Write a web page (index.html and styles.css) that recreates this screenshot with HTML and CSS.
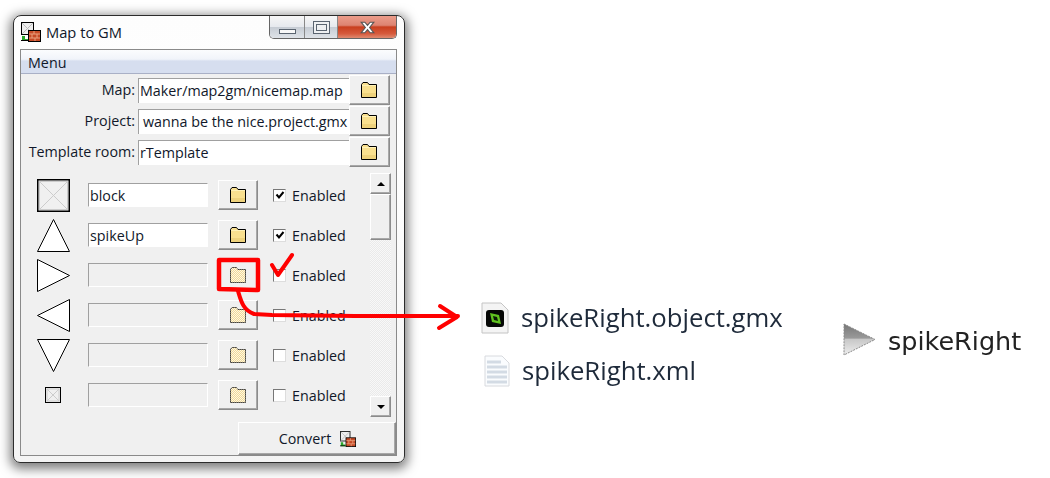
FILE: index.html
```html
<!DOCTYPE html>
<html lang="en">
<head>
<meta charset="utf-8">
<title>Map to GM</title>
<link rel="stylesheet" href="styles.css">
</head>
<body>
<svg class="defs" aria-hidden="true">
  <defs>
    <pattern id="dither" width="2" height="2" patternUnits="userSpaceOnUse">
      <rect width="2" height="2" fill="#fff8e0"/>
      <rect width="1" height="1" fill="#f0d898"/>
      <rect x="1" y="1" width="1" height="1" fill="#f0d898"/>
    </pattern>
    <linearGradient id="spikeShade" x1="0" y1="0" x2="0" y2="1">
      <stop offset="0" stop-color="#777"/>
      <stop offset=".45" stop-color="#999"/>
      <stop offset=".5" stop-color="#c8c8c8"/>
      <stop offset="1" stop-color="#eee"/>
    </linearGradient>
    <symbol id="folder" viewBox="0 0 16 16">
      <path d="M.5 15.500V2.500L2 .5H6.500L8 2.500H15.500V15.500Z" fill="#f9e08f" stroke="#000"/>
      <rect x="1" y="11" width="14" height="4" fill="#eed27c"/>
      <path d="M1 3.500H15" stroke="#fff2b8"/>
    </symbol>
    <symbol id="folder-off" viewBox="0 0 16 16">
      <path d="M.5 15.500V2.500L2 .5H6.500L8 2.500H15.500V15.500Z" fill="url(#dither)" stroke="#000" stroke-dasharray="1.200 .8"/>
    </symbol>
    <symbol id="app" viewBox="0 0 20 20">
      <rect x=".5" y=".5" width="12" height="12" fill="#eee" stroke="#000"/>
      <path d="M1 1L12 12M12 1L1 12" stroke="#bbb"/>
      <rect x="7.500" y="8.500" width="12" height="11" fill="#c64a26" stroke="#000"/>
      <path d="M8 12H19M8 16H19M13 9V12M11 12V16M16 12V16M14 16V19" stroke="#e9a07e"/>
      <path d="M1 14V19H7V17H4V14Z" fill="#2aa62a"/>
      <path d="M0 18.500H7" stroke="#000"/>
    </symbol>
  </defs>
</svg>

<main class="stage">
  <section class="window">
    <header class="titlebar">
      <svg class="app-icon"><use href="#app"/></svg>
      <span class="title">Map to GM</span>
      <div class="controls">
        <span class="ctl ctl-min"><i class="min-glyph"></i></span>
        <span class="ctl ctl-max"><i class="max-glyph"></i></span>
        <span class="ctl ctl-close">
          <svg class="close-glyph" viewBox="0 0 16 12"><path d="M2 1H5.500L8 4L10.500 1H14L10 6L14 11H10.500L8 8L5.500 11H2L6 6Z" fill="#fff" stroke="#555"/></svg>
        </span>
      </div>
    </header>

    <div class="client">
      <nav class="menubar">Menu</nav>

      <div class="paths">
        <label class="path-label">Map:</label>
        <div class="field field-path">Maker/map2gm/nicemap.map</div>
        <button class="btn btn-path"><svg class="folder"><use href="#folder"/></svg></button>

        <label class="path-label">Project:</label>
        <div class="field field-path field-inset">wanna be the nice.project.gmx</div>
        <button class="btn btn-path"><svg class="folder"><use href="#folder"/></svg></button>

        <label class="path-label">Template room:</label>
        <div class="field field-path">rTemplate</div>
        <button class="btn btn-path"><svg class="folder"><use href="#folder"/></svg></button>
      </div>

      <div class="objects">
        <div class="object-list">
          <div class="object">
            <div class="sprite"><svg class="sprite-svg" viewBox="0 0 33 33"><rect x=".75" y=".75" width="31.500" height="31.500" fill="#f0f0f0" stroke="#000" stroke-width="1.500"/><rect x="2.500" y="2.500" width="28" height="28" fill="none" stroke="#ccc"/><path d="M3 3L30 30M30 3L3 30" stroke="#ccc"/></svg></div>
            <div class="field field-object">block</div>
            <button class="btn btn-object"><svg class="folder"><use href="#folder"/></svg></button>
            <span class="check"><svg class="tick" viewBox="0 0 10 10"><path d="M1.500 4.500L4 7.500L8.500 2" fill="none" stroke="#000" stroke-width="2"/></svg></span>
            <span class="check-label">Enabled</span>
          </div>
          <div class="object">
            <div class="sprite"><svg class="sprite-svg" viewBox="0 0 33 33"><path d="M16.500 .5L32.500 32.500H.5Z" fill="#fff" stroke="#000"/></svg></div>
            <div class="field field-object">spikeUp</div>
            <button class="btn btn-object"><svg class="folder"><use href="#folder"/></svg></button>
            <span class="check"><svg class="tick" viewBox="0 0 10 10"><path d="M1.500 4.500L4 7.500L8.500 2" fill="none" stroke="#000" stroke-width="2"/></svg></span>
            <span class="check-label">Enabled</span>
          </div>
          <div class="object">
            <div class="sprite"><svg class="sprite-svg" viewBox="0 0 33 33"><path d="M.5 .5L32.500 16.500L.5 32.500Z" fill="#fff" stroke="#000"/></svg></div>
            <div class="field field-object field-off"></div>
            <button class="btn btn-object"><svg class="folder"><use href="#folder-off"/></svg></button>
            <span class="check"></span>
            <span class="check-label">Enabled</span>
          </div>
          <div class="object">
            <div class="sprite"><svg class="sprite-svg" viewBox="0 0 33 33"><path d="M32.500 .5L.5 16.500L32.500 32.500Z" fill="#fff" stroke="#000"/></svg></div>
            <div class="field field-object field-off"></div>
            <button class="btn btn-object"><svg class="folder"><use href="#folder-off"/></svg></button>
            <span class="check"></span>
            <span class="check-label">Enabled</span>
          </div>
          <div class="object">
            <div class="sprite"><svg class="sprite-svg" viewBox="0 0 33 33"><path d="M.5 .5H32.500L16.500 32.500Z" fill="#fff" stroke="#000"/></svg></div>
            <div class="field field-object field-off"></div>
            <button class="btn btn-object"><svg class="folder"><use href="#folder-off"/></svg></button>
            <span class="check"></span>
            <span class="check-label">Enabled</span>
          </div>
          <div class="object">
            <div class="sprite"><svg class="sprite-small" viewBox="0 0 16 16"><rect x=".5" y=".5" width="15" height="15" fill="#f0f0f0" stroke="#000"/><rect x="2" y="2" width="12" height="12" fill="none" stroke="#ccc"/><path d="M2 2L14 14M14 2L2 14" stroke="#ccc"/></svg></div>
            <div class="field field-object field-off"></div>
            <button class="btn btn-object"><svg class="folder"><use href="#folder-off"/></svg></button>
            <span class="check"></span>
            <span class="check-label">Enabled</span>
          </div>
        </div>

        <div class="scrollbar">
          <span class="btn scroll-btn"><i class="arrow-up"></i></span>
          <span class="btn scroll-thumb"></span>
          <span class="scroll-track"></span>
          <span class="btn scroll-btn"><i class="arrow-down"></i></span>
        </div>
      </div>

      <div class="footer">
        <button class="btn btn-convert">Convert <svg class="convert-icon"><use href="#app"/></svg></button>
      </div>
    </div>
  </section>

  <section class="files">
    <div class="file file-gmx">
      <svg class="file-icon" viewBox="0 0 28 32"><path d="M1 1H20L27 8V31H1Z" fill="#f4f4f4" stroke="#c4c4c4"/><rect x="5" y="8" width="18" height="17" rx="3" fill="#060806"/><path d="M9 11L18 13L20 22L11 20Z" fill="#5fc21f"/><path d="M12 14L16 15L17 19L13 18Z" fill="#0a1a05"/></svg>
      <span class="file-name">spikeRight.object.gmx</span>
    </div>
    <div class="file file-xml">
      <svg class="file-icon file-icon-xml" viewBox="0 0 26 32"><path d="M1 1H18L25 8V31H1Z" fill="#fafcfe" stroke="#d8dade"/><path d="M3 7H17M3 12H23M3 17H23M3 22H23M3 27H23" stroke="#d3dbe4" stroke-width="3"/></svg>
      <span class="file-name">spikeRight.xml</span>
    </div>
  </section>

  <section class="resource">
    <svg class="resource-icon" viewBox="0 0 33 33"><path d="M1 1L32 16.500L1 32Z" fill="url(#spikeShade)" stroke="#888" stroke-dasharray="2 1"/></svg>
    <span class="resource-name">spikeRight</span>
  </section>
</main>

<svg class="annotation" viewBox="0 0 1050 478" aria-hidden="true">
  <g fill="none" stroke="#f00" stroke-width="4" stroke-linecap="round" stroke-linejoin="round">
    <path d="M219 260H258L258 290L219 289Z" stroke-width="4.500"/>
    <path d="M238 291C241 301 243 310 254 314L272 315L355 316L458 316"/>
    <path d="M440 306L457 317L439 328"/>
    <path d="M272 265L278 275L292 255"/>
  </g>
</svg>
</body>
</html>
```
FILE: styles.css
```css
* { box-sizing: border-box; }
html, body { margin: 0; height: 100%; overflow: hidden; background: #fff; }
body { position: relative; font-family: "Open Sans", sans-serif; font-size: 14.3px; color: #10182a; }
.defs { position: absolute; width: 0; height: 0; }

.stage { display: flex; align-items: flex-start; width: 1050px; height: 478px; padding: 15px 0 0 13px; }

/* window */
.window {
  flex: none; width: 392px; height: 448px; padding: 0 7px 6px 6px;
  border: 1px solid #2c2c2c; border-radius: 8px 8px 7px 7px;
  background: linear-gradient(#fdfdfd, #fff 30%, #f4f4f4);
  box-shadow: 0 3px 11px 3px rgba(0,0,0,.5);
  display: flex; flex-direction: column;
}
.titlebar { flex: none; height: 33px; display: flex; align-items: flex-start; position: relative; }
.app-icon { width: 20px; height: 20px; margin: 6px 5px 0 1px; flex: none; }
.title { margin-top: 5px; line-height: 22px; font-size: 14.7px; }
.controls { margin-left: auto; display: flex; height: 23px; width: 128px; border: 1px solid #666; border-top: 0; border-radius: 0 0 5px 5px; overflow: hidden; }
.ctl { display: flex; align-items: center; justify-content: center; }
.ctl-min, .ctl-max { background: linear-gradient(#f6f6f6 0, #e6e9ee 48%, #c6ccd4 52%, #dfe3e8 100%); border-right: 1px solid #888; }
.ctl-min { width: 35px; }
.ctl-max { width: 33px; }
.ctl-close { flex: 1; background: linear-gradient(#eb9c8a 0, #dd8472 42%, #c93f1f 50%, #d65a3c 80%, #e08a70 100%); }
.min-glyph { display: block; width: 17px; height: 5px; margin-top: 8px; background: #f8f8f8; border: 1px solid #5a6470; }
.max-glyph { display: block; width: 17px; height: 13px; border: 1px solid #5a6470; position: relative; background: #eef0f2; }
.max-glyph::after { content: ""; position: absolute; left: 2px; top: 2px; right: 2px; bottom: 2px; border: 1px solid #5a6470; }
.close-glyph { width: 17px; height: 13px; }

.client { flex: 1; min-height: 0; border: 1px solid #8a8a8a; background: #f0f0f0; display: flex; flex-direction: column; }
.menubar { flex: none; height: 24px; padding: 0 7px; line-height: 25px; border-bottom: 1px solid #a9b0c6; background: linear-gradient(#fbfcfe 0, #f1f4fa 40%, #d6deef 48%, #d6deef 100%); }

/* file paths */
.paths { flex: none; display: grid; grid-template-columns: auto 211px 41px; row-gap: 1px; grid-auto-rows: 30px; padding-top: 1px; margin-right: 6px; justify-content: end; align-items: center; }
.path-label { text-align: right; white-space: nowrap; line-height: 30px; padding-right: 3px; }

.field { background: #fff; border-top: 1px solid #a0a0a0; border-left: 1px solid #a0a0a0; white-space: nowrap; overflow: hidden; }
.field-path { height: 25px; line-height: 23px; padding-left: 1px; }
.field-inset { padding-left: 4px; }
.field-object { flex: none; width: 120px; height: 24px; line-height: 23px; padding-left: 1px; margin-left: 18px; border-bottom: 1px solid #fff; border-right: 1px solid #fff; }
.field-off { background: #f0f0f0; }

.btn { display: flex; align-items: center; justify-content: center; padding: 0; font: inherit; color: inherit; background: #f0f0f0; border: 1px solid; border-color: #fff #8c8c8c #8c8c8c #fff; box-shadow: inset -1px -1px 0 #a8a8a8; }
.btn-path { width: 41px; height: 30px; padding-right: 1px; }
.folder { width: 16px; height: 16px; }

/* objects */
.objects { flex: none; display: flex; margin-top: 6px; height: 244px; }
.object-list { flex: none; width: 349px; padding-top: 2px; }
.object { height: 40px; display: flex; align-items: center; }
.sprite { flex: none; width: 33px; height: 33px; margin-left: 16px; display: flex; align-items: center; justify-content: center; }
.sprite-svg { width: 33px; height: 33px; display: block; }
.sprite-small { width: 16px; height: 16px; display: block; margin-right: 1px; }
.btn-object { flex: none; width: 40px; height: 30px; margin-left: 10px; }
.check { flex: none; width: 13px; height: 13px; margin-left: 15px; background: #fff; border-top: 1px solid #777; border-left: 1px solid #777; border-right: 1px solid #ddd; border-bottom: 1px solid #ddd; display: flex; align-items: center; justify-content: center; }
.tick { width: 10px; height: 10px; }
.check-label { margin-left: 6px; white-space: nowrap; }

.scrollbar { flex: none; width: 21px; display: flex; flex-direction: column; }
.scroll-btn { flex: none; height: 21px; }
.scroll-thumb { flex: none; height: 46px; }
.scroll-track { flex: 1; background-color: #f6f6f6; background-image: repeating-conic-gradient(#eaeaea 0 25%, #f8f8f8 0 50%); background-size: 2px 2px; }
.arrow-up, .arrow-down { display: block; width: 0; height: 0; border-left: 4px solid transparent; border-right: 4px solid transparent; }
.arrow-up { border-bottom: 4px solid #000; }
.arrow-down { border-top: 4px solid #000; }

.footer { flex: 1; display: flex; justify-content: flex-end; align-items: flex-end; }
.btn-convert { width: 158px; height: 33px; gap: 9px; padding-left: 1px; }
.convert-icon { width: 16px; height: 16px; flex: none; }

/* explorer files */
.files { flex: none; margin: 288px 0 0 76px; width: 302px; filter: blur(.5px); color: #1e2a3a; }
.file { display: flex; align-items: center; }
.file-gmx { height: 30px; }
.file-xml { height: 32px; margin-top: 22px; padding-left: 3px; }
.file-icon { width: 28px; height: 32px; flex: none; margin-right: 12px; }
.file-icon-xml { width: 26px; margin-right: 12px; }
.file-name { font-size: 25.7px; line-height: 30px; white-space: nowrap; }

.resource { flex: none; margin: 308px 0 0 60px; display: flex; align-items: center; gap: 12px; filter: blur(.6px); }
.resource-icon { width: 33px; height: 33px; flex: none; }
.resource-name { font-family: "DejaVu Sans", sans-serif; font-size: 25.5px; color: #222; white-space: nowrap; padding-top: 2px; }

.annotation { position: absolute; left: 0; top: 0; width: 1050px; height: 478px; pointer-events: none; }
```
